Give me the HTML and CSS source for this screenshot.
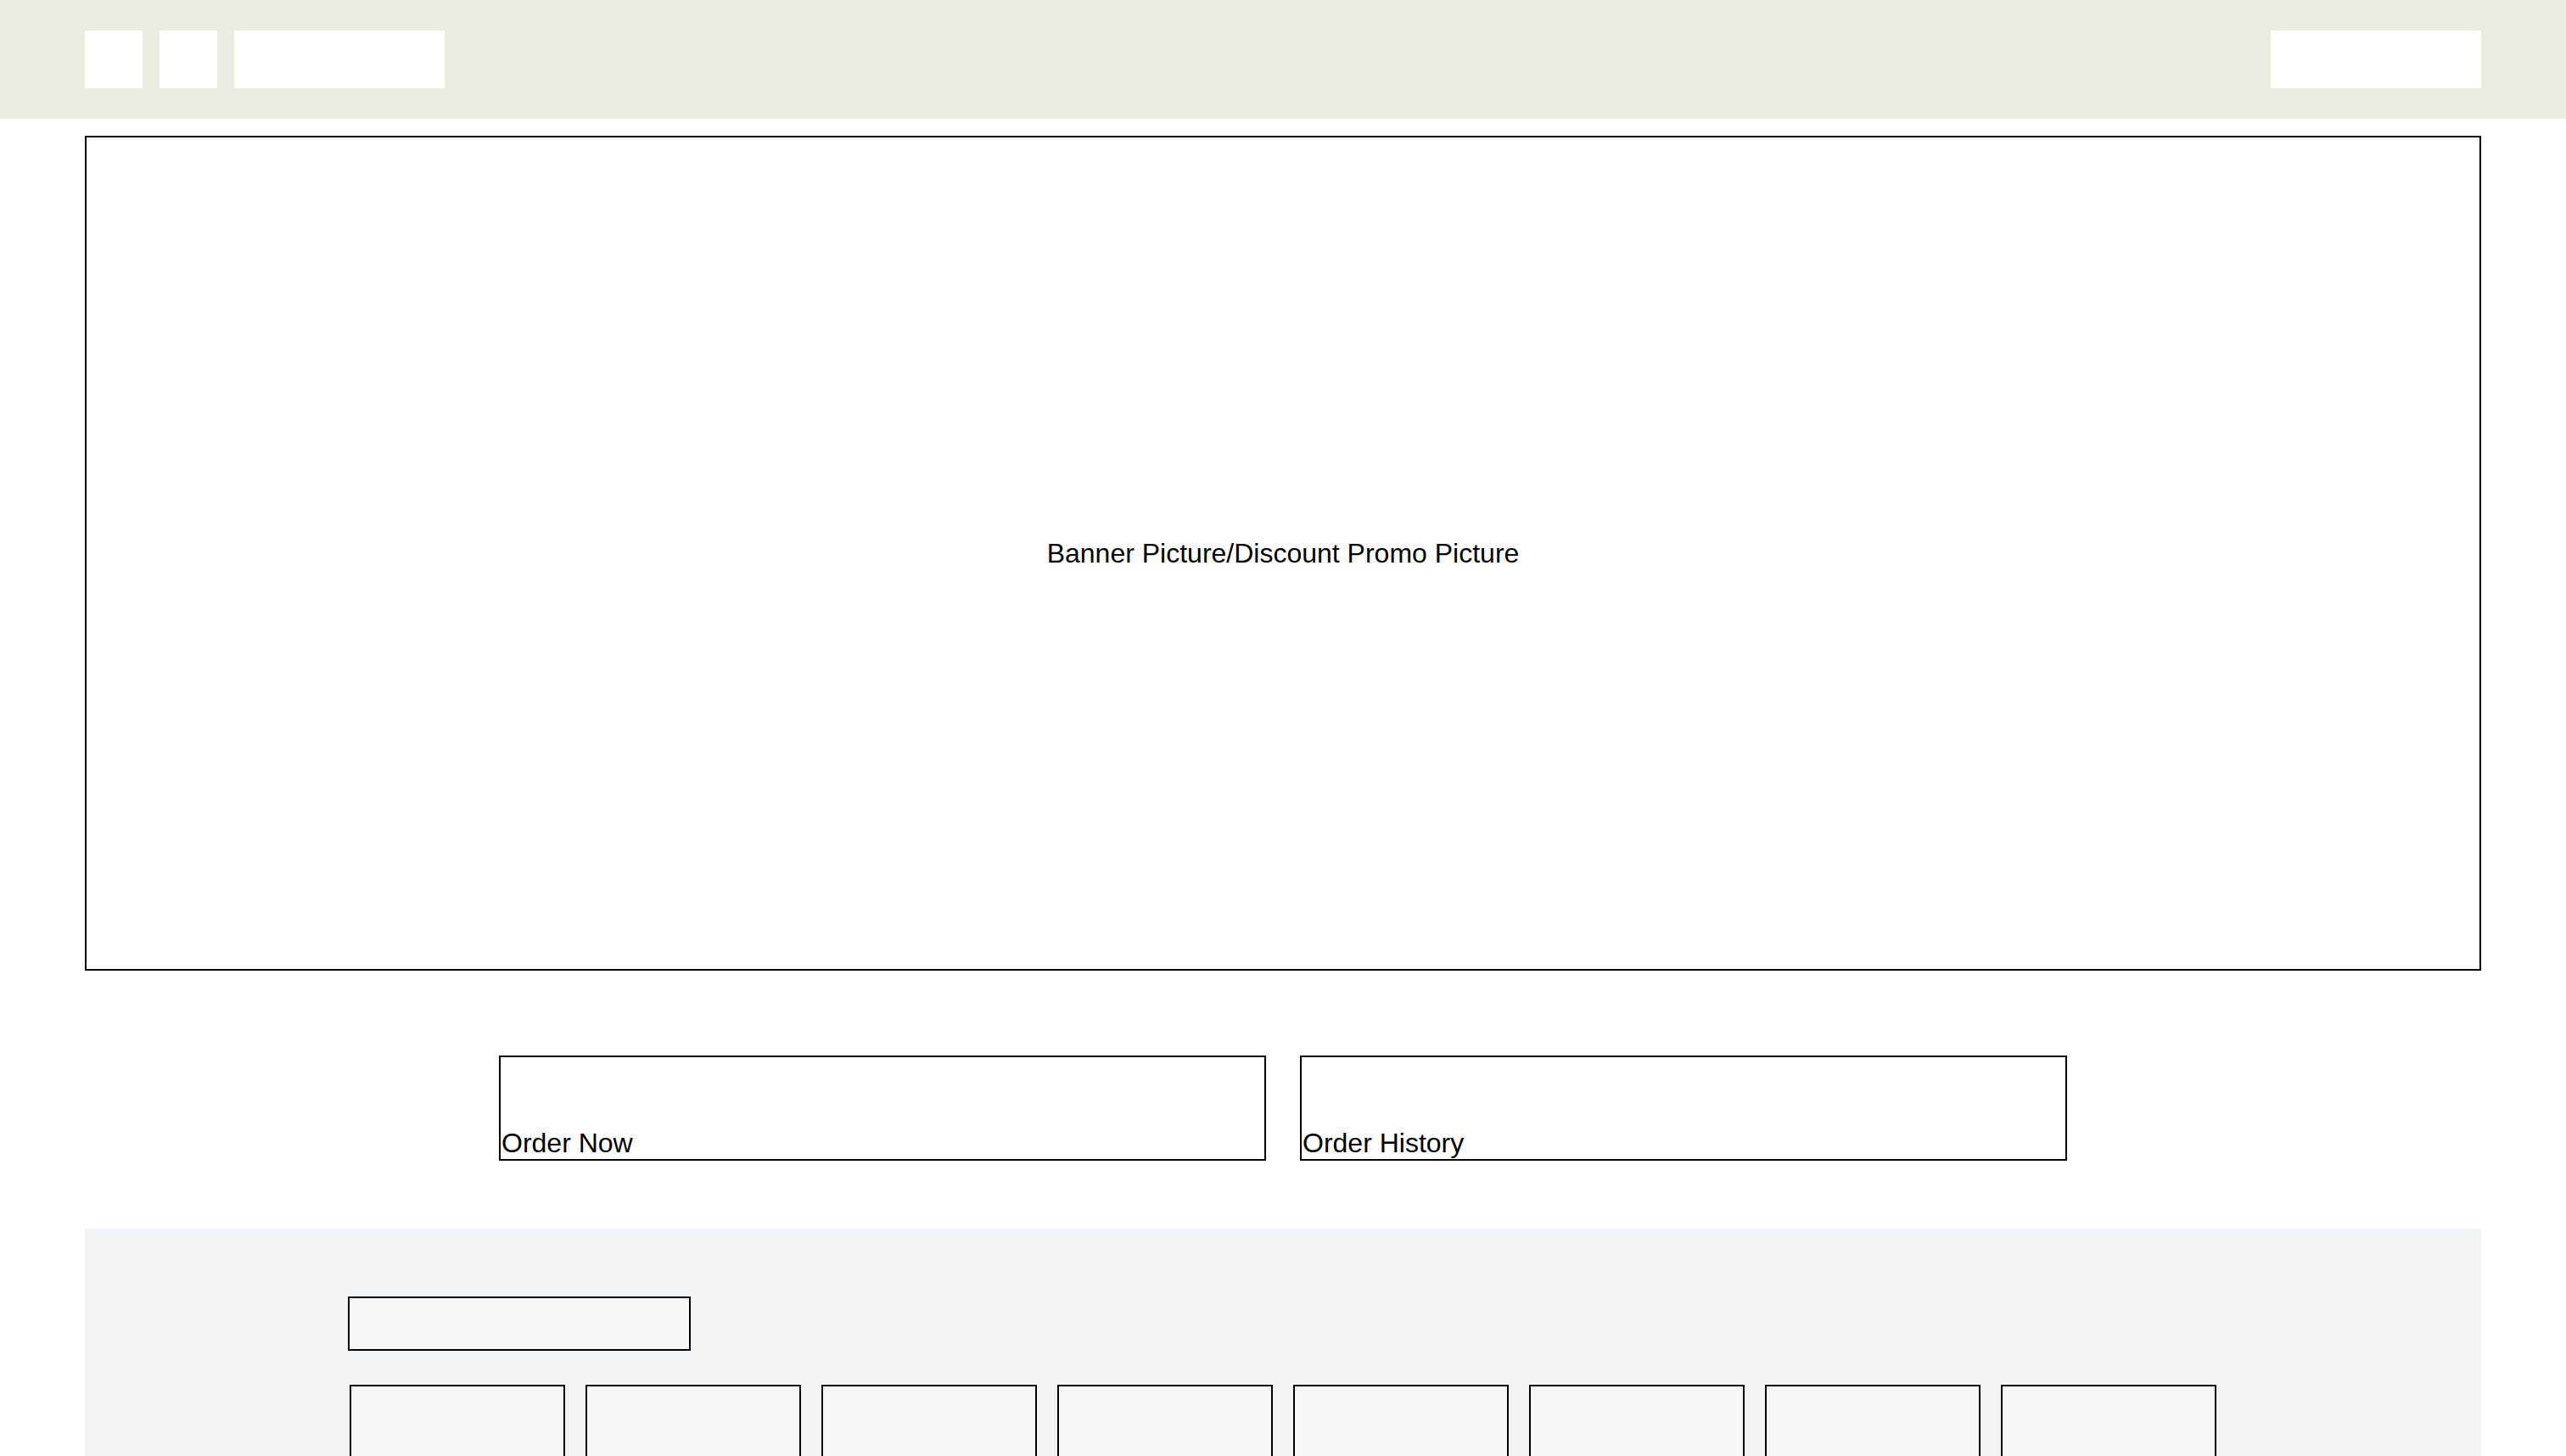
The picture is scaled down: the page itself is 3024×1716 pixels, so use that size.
FILE: index.html
```html
<!DOCTYPE html>
<html lang="en">
<head>
<meta charset="utf-8">
<title>Home</title>
<link rel="stylesheet" href="styles.css">
</head>
<body>
<header class="topbar">
  <div class="topbar-left">
    <div class="nav-box nav-square"></div>
    <div class="nav-box nav-square"></div>
    <div class="nav-box nav-wide"></div>
  </div>
  <div class="nav-box nav-wide"></div>
</header>
<main class="page">
  <section class="banner">Banner Picture/Discount Promo Picture</section>
  <div class="actions">
    <div class="action-btn">Order Now</div>
    <div class="action-btn">Order History</div>
  </div>
  <section class="menu">
    <div class="menu-inner">
      <div class="search-box"></div>
      <div class="cards">
        <div class="card"></div>
        <div class="card"></div>
        <div class="card"></div>
        <div class="card"></div>
        <div class="card"></div>
        <div class="card"></div>
        <div class="card"></div>
        <div class="card"></div>
      </div>
    </div>
  </section>
</main>
</body>
</html>
```
FILE: styles.css
```css
* { box-sizing: border-box; }
html, body {
  margin: 0;
  padding: 0;
  background: #ffffff;
  font-family: "Liberation Sans", Arial, sans-serif;
  color: #000000;
}
.topbar {
  height: 140px;
  background: #eaecdf;
  padding: 36px 100px;
  display: flex;
  justify-content: space-between;
  align-items: flex-start;
}
.topbar-left {
  display: flex;
  gap: 20px;
}
.nav-box {
  height: 68px;
  background: #ffffff;
}
.nav-square { width: 68px; }
.nav-wide { width: 248px; }
.page {
  margin: 20px 100px 0;
}
.banner {
  height: 984px;
  border: 2px solid #000;
  display: flex;
  align-items: center;
  justify-content: center;
  font-size: 32px;
}
.actions {
  display: flex;
  justify-content: center;
  gap: 40px;
  margin-top: 100px;
}
.action-btn {
  width: 904px;
  height: 124px;
  border: 2px solid #000;
  background: #fff;
  display: flex;
  align-items: flex-end;
  font-size: 32px;
  line-height: 1.15;
  padding-left: 1px;
}
.menu {
  margin-top: 80px;
  background: #f2f3f5;
  padding: 80px 0 80px;
  min-height: 600px;
}
.menu-inner {
  width: 2204px;
  margin: 0 auto;
}
.search-box {
  width: 404px;
  height: 64px;
  border: 2px solid #000;
  background: #f7f7f7;
}
.cards {
  display: flex;
  gap: 24px;
  margin-top: 40px;
  padding: 0 2px;
}
.card {
  width: 254px;
  height: 300px;
  border: 2px solid #000;
  background: #f7f7f7;
}
```
